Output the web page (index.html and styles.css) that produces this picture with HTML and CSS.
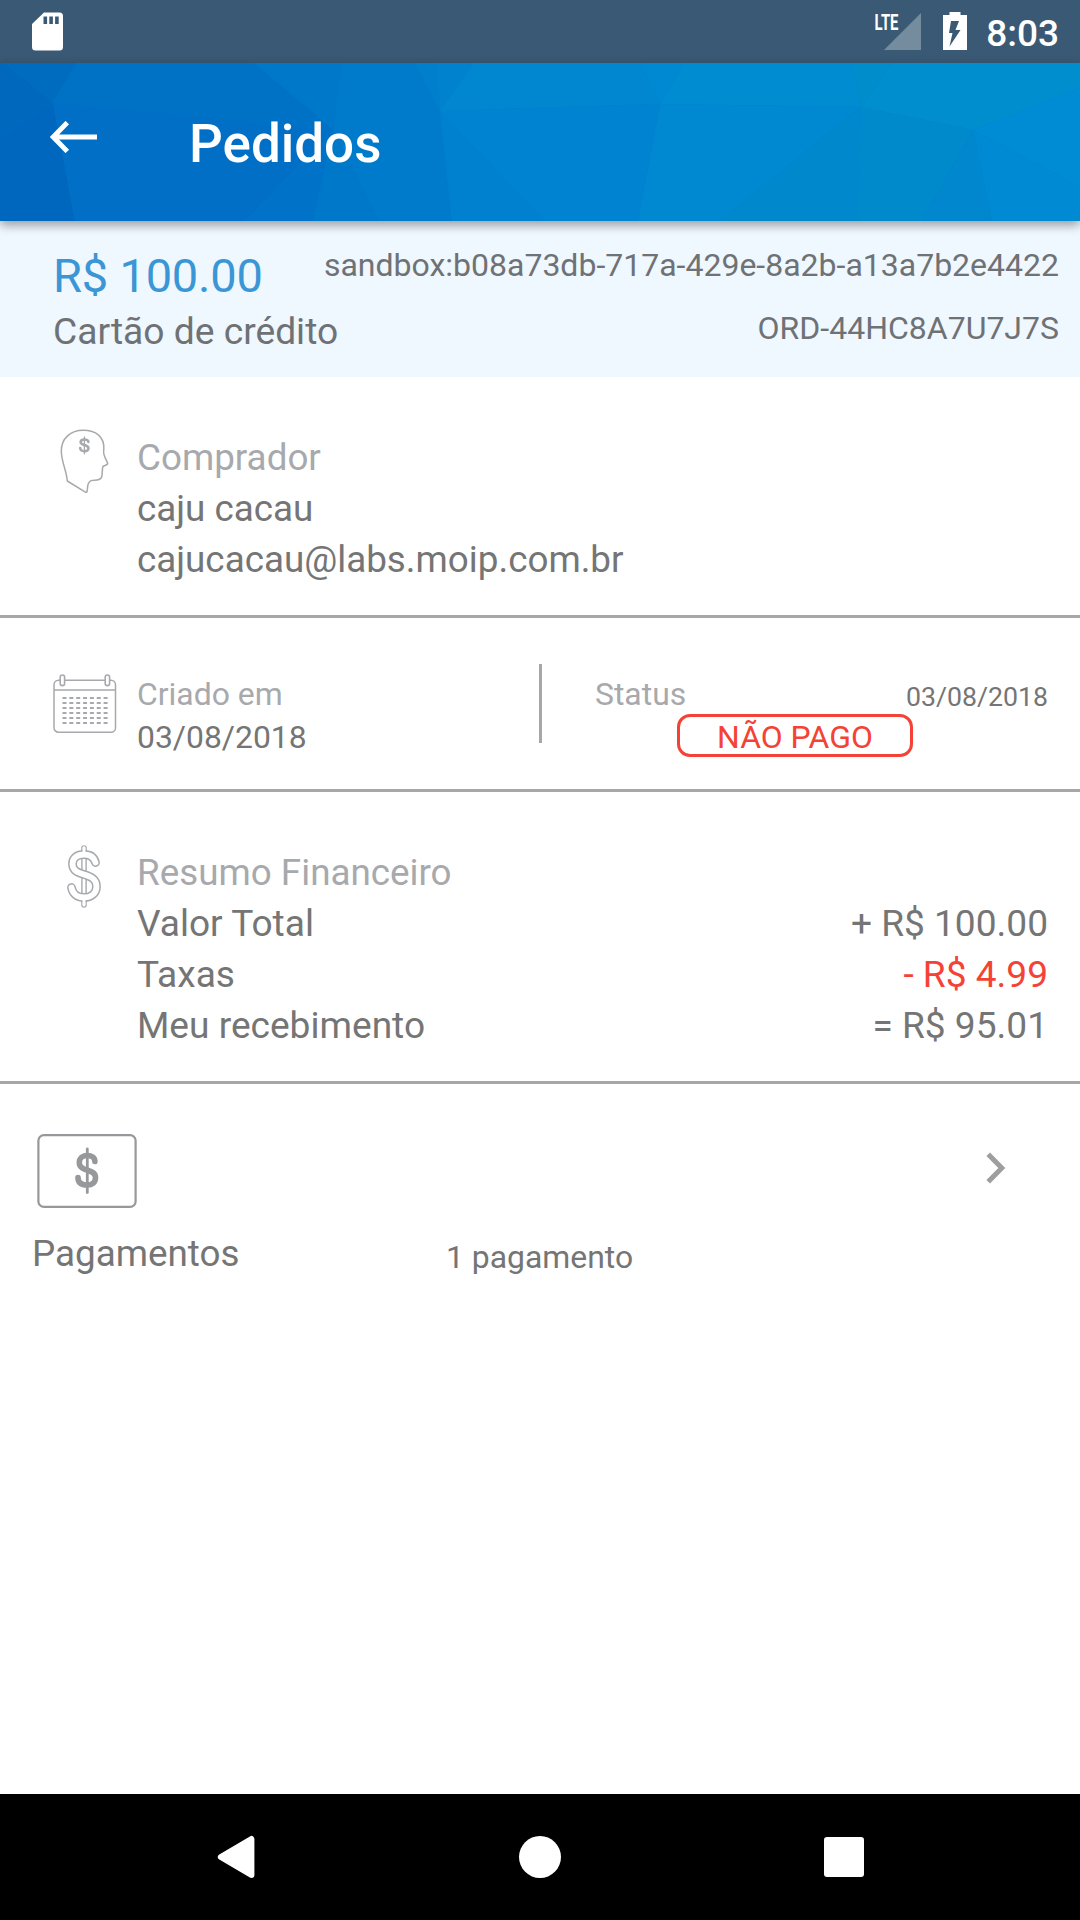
FILE: index.html
```html
<!DOCTYPE html>
<html lang="pt-BR">
<head>
<meta charset="utf-8">
<title>Pedidos</title>
<link rel="stylesheet" href="styles.css">
</head>
<body>
<div class="screen">
  <div class="status-bar">
    <svg class="sd-icon" viewBox="0 0 31 39"><path fill="#fff" fill-rule="evenodd" d="M12 .5H27.500a3.500 3.500 0 0 1 3.500 3.500V35a3.500 3.500 0 0 1-3.500 3.500H3.500A3.500 3.500 0 0 1 0 35V12ZM11.500 4.500V12h3.600V4.500ZM17.300 4.500V12h3.600V4.500ZM23.100 4.500V12h3.600V4.500Z"/></svg>
    <div class="status-right">
      <svg class="signal-icon" viewBox="-2 -6 49 44"><path fill="#fff" fill-opacity=".3" d="M46 1V38H9Z"/><text class="lte" x="-0.500" y="18" textLength="24" lengthAdjust="spacingAndGlyphs">LTE</text></svg>
      <svg class="battery-icon" viewBox="0 0 24 38"><path fill="#fff" fill-rule="evenodd" d="M6.500 0H17.500V3H24V38H0V3H6.500ZM8 9 6 21H9.500L6.500 34.500 17.500 18H12.500L16 9Z"/></svg>
      <span class="clock">8:03</span>
    </div>
  </div>

  <header class="app-bar">
    <svg class="facets" viewBox="0 63 1080 158" preserveAspectRatio="none">
      <path fill="#0069bd" d="M0 63H5L53 102 0 137Z"/>
      <path fill="#006cc0" d="M5 63H77L53 102Z"/>
      <path fill="#0067be" d="M0 137 53 102 75 221H0Z"/>
      <path fill="#0072c5" d="M77 63H254L334 130 53 102Z"/>
      <path fill="#006fc5" d="M53 102 334 130 245 221H75Z"/>
      <path fill="#0073c8" d="M334 130 313 221H245Z"/>
      <path fill="#0078c9" d="M254 63H342L334 130Z"/>
      <path fill="#007bcb" d="M342 63H415L440 111 452 221H380L334 130Z"/>
      <path fill="#0078ca" d="M334 130 380 221H313Z"/>
      <path fill="#007fcc" d="M415 63H436L440 111Z"/>
      <path fill="#0082cf" d="M436 63H474L440 111Z"/>
      <path fill="#0087d0" d="M474 63H640L660 104 440 111Z"/>
      <path fill="#0081cf" d="M440 111 545 221H452Z"/>
      <path fill="#0083d0" d="M440 111 660 104 638 221H545Z"/>
      <path fill="#0089d3" d="M640 63H685L660 104Z"/>
      <path fill="#008cd0" d="M685 63H852L861 107 660 104Z"/>
      <path fill="#0088d1" d="M660 104 861 107 720 221H638Z"/>
      <path fill="#0088cd" d="M861 107 857 221H720Z"/>
      <path fill="#008dcc" d="M852 63H892L861 107Z"/>
      <path fill="#008ecf" d="M892 63H1080V88L973 130 861 107Z"/>
      <path fill="#008acc" d="M861 107 973 130 922 221H857Z"/>
      <path fill="#0087ce" d="M973 130 992 221H922Z"/>
      <path fill="#008cd5" d="M973 130 1080 88V187Z"/>
      <path fill="#008ad3" d="M973 130 1080 187V221H992Z"/>
    </svg>
    <svg class="back-icon" viewBox="0 0 48 32"><path fill="none" stroke="#fff" stroke-width="4.900" d="M47 16H4M17.300 1.600 3.200 16 17.300 30.400"/></svg>
    <h1 class="title">Pedidos</h1>
  </header>

  <section class="order">
    <div class="order-row order-top">
      <div class="price">R$ 100.00</div>
      <div class="order-id">sandbox:b08a73db-717a-429e-8a2b-a13a7b2e4422</div>
    </div>
    <div class="order-row">
      <div class="method">Cartão de crédito</div>
      <div class="order-id order-code">ORD-44HC8A7U7J7S</div>
    </div>
  </section>

  <section class="block buyer">
    <svg class="head-icon" viewBox="0 0 49 65"><g fill="none" stroke="#a7a9ac" stroke-linejoin="round" stroke-linecap="round"><path stroke-width="1.500" d="M1.300 22.700C1 9 11 1.300 23.300 1.300 36 1.300 44.500 8 43.800 20 42.500 27 46.500 30 47.700 34.500 47.300 36.500 44.500 36.300 42.800 37.600 42 42 42.600 45 41.500 48.500 39 52.500 34 50.500 31 51.600 26 54 28.500 59 26.800 63.300H25.800L7.300 52C6.500 41 2 35 1.300 22.700Z"/><path stroke-width="2.500" d="M28.400 13C28.300 11.300 26.500 10.500 24.300 10.500 22 10.500 20.600 11.700 20.600 13.300 20.600 17 28.500 15 28.500 19.300 28.500 21.300 26.800 22.200 24.500 22.200 22 22.200 20.300 21.200 20.200 19"/><path stroke-width="1.300" d="M24.400 8V24.800"/></g></svg>
    <div class="lines">
      <div class="label">Comprador</div>
      <div>caju cacau</div>
      <div>cajucacau@labs.moip.com.br</div>
    </div>
  </section>

  <section class="block dates">
    <svg class="calendar-icon" viewBox="0 0 64 60"><g fill="none" stroke="#a7a9ac"><rect x="1" y="6.200" width="61.500" height="52" rx="4.500" stroke-width="1.500"/><path stroke-width="1.300" d="M1 16H62.500"/><g stroke-width="1.600" fill="#fff"><rect x="7.200" y="1" width="4.400" height="10.600" rx="2.200"/><rect x="52.200" y="1" width="4.400" height="10.600" rx="2.200"/></g><path stroke-width="2.200" stroke-dasharray="4 2.850" d="M9.500 24H55.500M9.500 29H55.500M9.500 34H55.500M9.500 39H55.500M9.500 44H55.500M9.500 49H55.500"/></g></svg>
    <div class="lines created">
      <div class="label">Criado em</div>
      <div>03/08/2018</div>
    </div>
    <div class="divider"></div>
    <div class="status">
      <div class="status-head"><span class="label">Status</span><span class="status-date">03/08/2018</span></div>
      <div class="badge">NÃO PAGO</div>
    </div>
  </section>

  <section class="block finance">
    <svg class="dollar-icon" viewBox="0 0 36 65"><g fill="none" stroke-linecap="round" stroke-linejoin="round"><path stroke="#a7a9ac" stroke-width="5.600" d="M18 4V61"/><path stroke="#fff" stroke-width="2.800" d="M18 4V61"/><path stroke="#a7a9ac" stroke-width="8.800" d="M29.500 18.500C28 13 24 10.500 18 10.500 11.500 10.500 6.500 13.500 6.500 20 6.500 34 30.500 27 30.500 42.500 30.500 49.500 25 53.500 18 53.500 11 53.500 6.500 49.500 5.500 43.500"/><path stroke="#fff" stroke-width="5.800" d="M29.500 18.500C28 13 24 10.500 18 10.500 11.500 10.500 6.500 13.500 6.500 20 6.500 34 30.500 27 30.500 42.500 30.500 49.500 25 53.500 18 53.500 11 53.500 6.500 49.500 5.500 43.500"/><path stroke="#fff" stroke-width="2.800" d="M18 4V10M18 54V61"/></g></svg>
    <div class="lines grow">
      <div class="label">Resumo Financeiro</div>
      <div class="row"><span>Valor Total</span><span>+ R$ 100.00</span></div>
      <div class="row"><span>Taxas</span><span class="negative">- R$ 4.99</span></div>
      <div class="row"><span>Meu recebimento</span><span>= R$ 95.01</span></div>
    </div>
  </section>

  <section class="payments">
    <div class="payments-top">
      <svg class="money-icon" viewBox="0 0 100 74"><g fill="none" stroke="#97989c" stroke-linecap="round"><rect x="1.400" y="1.100" width="97.200" height="71.800" rx="5.500" stroke-width="2.200"/><path stroke-width="5.600" d="M57.900 27.500C57.800 23.500 54.800 21.500 50.300 21.500 45 21.500 42.300 24.800 42.300 28.500 42.300 38.500 58.500 34 58.500 43.500 58.500 48.500 55.300 51 50.300 51 44.300 51 41 48.500 41 43.500"/><path stroke-width="2.800" d="M50.300 15V58.500"/></g></svg>
      <svg class="chevron-icon" viewBox="0 0 20 32"><path fill="none" stroke="#9e9e9e" stroke-width="5" d="M2.200 2.200 15.800 16 2.200 29.800"/></svg>
    </div>
    <div class="payments-text"><span class="payments-name">Pagamentos</span><span class="payments-count">1 pagamento</span></div>
  </section>

  <nav class="nav-bar">
    <svg class="nav-icon" viewBox="0 0 44 44"><path fill="#fff" stroke="#fff" stroke-width="6" stroke-linejoin="round" d="M6.800 22 37.400 4V40Z"/></svg>
    <svg class="nav-icon" viewBox="0 0 44 44"><circle cx="22" cy="22" r="21" fill="#fff"/></svg>
    <svg class="nav-icon" viewBox="0 0 44 44"><rect x="2" y="2" width="40" height="40" rx="3" fill="#fff"/></svg>
  </nav>
</div>
</body>
</html>
```
FILE: styles.css
```css
* { box-sizing: border-box; }
body {
  margin: 0;
  background: #fff;
  color: #757575;
  font-family: Roboto, "Liberation Sans", sans-serif;
  font-size: 36.8px;
  line-height: 51px;
}
svg { display: block; flex: none; }
.screen { width: 1080px; height: 1920px; display: flex; flex-direction: column; overflow: hidden; white-space: nowrap; }

.status-bar { height: 63px; background: #3a5974; display: flex; justify-content: space-between; padding: 12px 21px 0 32px; flex: none; }
.sd-icon { width: 31px; height: 39px; }
.status-right { display: flex; }
.signal-icon { width: 49px; height: 44px; margin: -6px 21px 0 0; }
.lte { font: 700 22.5px Roboto, sans-serif; fill: #fff; }
.battery-icon { width: 24px; height: 38px; margin-right: 19px; }
.clock { color: #fff; font-weight: 500; font-size: 37px; line-height: 43px; }

.app-bar { position: relative; z-index: 1; height: 158px; flex: none; display: flex; align-items: flex-start; background: #007dcc; box-shadow: 0 4px 10px rgba(0, 0, 0, .38); }
.facets { position: absolute; inset: 0; width: 100%; height: 100%; z-index: -1; }
.back-icon { width: 48px; height: 32px; margin: 58px 91px 0 50px; }
.title { margin: 50px 0 0; color: #fff; font-weight: 500; font-size: 53px; line-height: 62px; }

.order { height: 156px; flex: none; background: #eff7ff; padding: 25px 21px 0 53px; color: #6f7275; }
.order-row { display: flex; justify-content: space-between; align-items: flex-start; }
.order-top { height: 60px; }
.price { color: #3a96d4; font-size: 47px; letter-spacing: -.2px; line-height: 58px; margin-top: 1px; }
.method { font-size: 37.2px; }
.order-id { font-size: 32px; line-height: 38px; }
.order-code { margin-top: 3px; }

.block { display: flex; align-items: flex-start; flex: none; border-bottom: 3px solid #a7a7ab; }
.label { color: #a7a9ac; }
.grow { flex: 1; }

.buyer { height: 241px; padding: 55px 32px 0 60px; }
.head-icon { width: 49px; height: 65px; margin: -3px 28px 0 0; }

.dates { height: 174px; padding: 46px 32px 0 53px; font-size: 31.9px; line-height: 43px; }
.calendar-icon { width: 64px; height: 60px; margin: 10px 20px 0 0; }
.created { width: 402px; padding-top: 9px; }
.divider { width: 3px; height: 79px; background: #a7a7ab; }
.status { flex: 1; padding: 9px 0 0 53px; }
.status-head { display: flex; justify-content: space-between; height: 41px; }
.status-date { font-size: 26.7px; line-height: 48px; }
.badge { width: 236px; height: 43px; margin-left: 82px; border: 3px solid #f44336; border-radius: 13px; color: #f44336; text-align: center; line-height: 40px; }

.finance { height: 292px; padding: 55px 32px 0 66px; }
.dollar-icon { width: 36px; height: 65px; margin: -3px 35px 0 0; }
.row { display: flex; justify-content: space-between; font-size: 37.1px; }
.negative { color: #f44336; }

.payments { flex: 1; padding-top: 50px; }
.payments-top { display: flex; justify-content: space-between; padding: 0 74px 0 37px; height: 94px; }
.money-icon { width: 100px; height: 74px; }
.chevron-icon { width: 20px; height: 32px; margin-top: 18px; }
.payments-text { display: flex; align-items: flex-start; padding-left: 32px; }
.payments-name { width: 414px; }
.payments-count { font-size: 31.9px; padding-top: 4px; }

.nav-bar { height: 126px; flex: none; background: #000; display: flex; align-items: center; justify-content: space-between; padding: 0 214px; }
.nav-icon { width: 44px; height: 44px; }
```
